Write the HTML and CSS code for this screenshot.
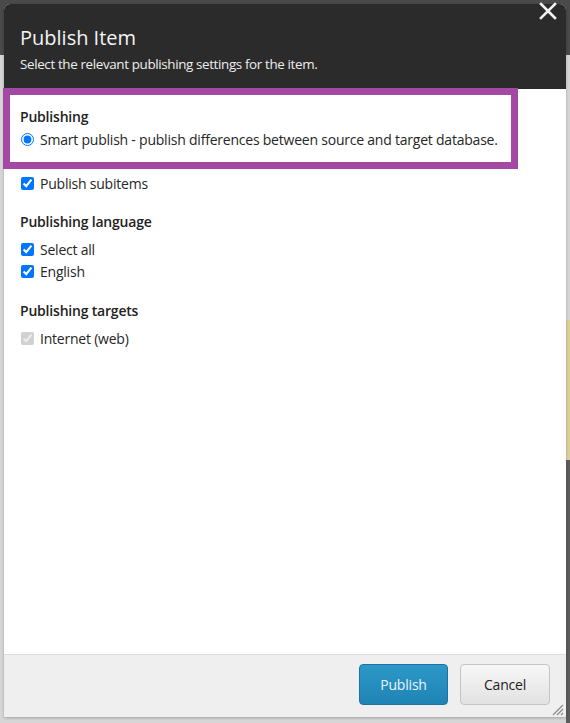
FILE: index.html
```html
<!DOCTYPE html>
<html lang="en">
<head>
<meta charset="utf-8">
<title>Publish Item</title>
<link rel="stylesheet" href="styles.css">
</head>
<body>
<div class="page">
  <div class="dialog">
    <header class="dialog-header">
      <h1 class="dialog-title">Publish Item</h1>
      <p class="dialog-subtitle">Select the relevant publishing settings for the item.</p>
      <svg class="close" width="20" height="20" viewBox="0 0 20 20" aria-label="Close">
        <path d="M3 3 L17 17 M17 3 L3 17" stroke="#f2f2f2" stroke-width="2.6" stroke-linecap="square"/>
      </svg>
    </header>
    <main class="dialog-body">
      <section class="group group-first">
        <h2 class="group-title">Publishing</h2>
        <label class="option option-tight"><input type="radio" name="mode" checked><span>Smart publish - publish differences between source and target database.</span></label>
        <label class="option option-sub"><input type="checkbox" checked><span>Publish subitems</span></label>
      </section>
      <section class="group">
        <h2 class="group-title">Publishing language</h2>
        <label class="option"><input type="checkbox" checked><span>Select all</span></label>
        <label class="option option-next"><input type="checkbox" checked><span>English</span></label>
      </section>
      <section class="group">
        <h2 class="group-title">Publishing targets</h2>
        <label class="option"><input type="checkbox" checked disabled><span>Internet (web)</span></label>
      </section>
    </main>
    <footer class="dialog-footer">
      <button class="btn btn-primary" type="button">Publish</button>
      <button class="btn btn-default" type="button">Cancel</button>
      <svg class="grip" width="14" height="14" viewBox="0 0 14 14">
        <path d="M13 3 L3 13 M13 7 L7 13 M13 11 L11 13" stroke="#8a8a8a" stroke-width="1.2"/>
      </svg>
    </footer>
  </div>
  <div class="highlight"></div>
</div>
</body>
</html>
```
FILE: styles.css
```css
* { box-sizing: border-box; }
html, body { margin: 0; padding: 0; }
body {
  width: 570px;
  height: 723px;
  overflow: hidden;
  font-family: "Open Sans", "Noto Sans", sans-serif;
  color: #262626;
  background:
    linear-gradient(to bottom, #4a4a4a 0, #4a4a4a 55px, transparent 55px),
    linear-gradient(to bottom, transparent 0, transparent 320px, #d9cf9f 320px, #d9cf9f 460px, #5c5c5c 460px) right top / 4px 100% no-repeat,
    #d6d6d6;
}
.page {
  position: relative;
  padding: 4px;
  height: 723px;
}
.dialog {
  width: 562px;
  height: 713px;
  display: flex;
  flex-direction: column;
  background: #fff;
  border-radius: 6px 6px 2px 2px;
  box-shadow: 0 1px 3px rgba(0,0,0,0.25);
}
.dialog-header {
  position: relative;
  height: 85px;
  background: #2b2b2b;
  color: #fff;
  padding: 21px 16px 0 16px;
  border-radius: 6px 6px 0 0;
}
.dialog-title {
  margin: 0;
  font-size: 20px;
  font-weight: 400;
  line-height: 26px;
  color: #f4f4f4;
}
.dialog-subtitle {
  margin: 3px 0 0 0;
  font-size: 13.4px;
  letter-spacing: -0.36px;
  line-height: 20px;
  color: #eeeeee;
}
.close {
  position: absolute;
  top: -3px;
  right: 8px;
}
.dialog-body {
  flex: 1;
  padding: 17px 16px 0 16px;
}
.group { margin-top: 17px; }
.group-first { margin-top: 0; }
.group + .group + .group { margin-top: 18px; }
.group-title {
  margin: 0;
  font-size: 14px;
  font-weight: 600;
  letter-spacing: -0.2px;
  line-height: 22px;
  color: #222;
}
.option {
  display: flex;
  align-items: center;
  height: 22px;
  margin-top: 5px;
  font-size: 14px;
  letter-spacing: -0.22px;
  color: #262626;
}
.option-tight { margin-top: 0; }
.option-sub { margin-top: 22px; }
.option-next { margin-top: 0; }
.option input {
  margin: 0 6px 0 1px;
  width: 13px;
  height: 13px;
  flex: none;
}
.dialog-footer {
  position: relative;
  height: 63px;
  background: #efefef;
  border-top: 1px solid #dedede;
  display: flex;
  justify-content: flex-end;
  align-items: flex-start;
  gap: 12px;
  padding: 9px 16px 0 0;
  border-radius: 0 0 2px 2px;
}
.btn {
  height: 41px;
  font-family: "Open Sans", "Noto Sans", sans-serif;
  font-size: 14px;
  letter-spacing: -0.2px;
  border-radius: 4px;
  padding: 0;
}
.btn-primary {
  width: 89px;
  color: #e9f5fb;
  background: linear-gradient(to bottom, #2c98c7, #1f84b5);
  border: 1px solid #1d74a0;
}
.btn-default {
  width: 90px;
  color: #222;
  background: linear-gradient(to bottom, #f7f7f7, #e2e2e2);
  border: 1px solid #c4c4c4;
}
.grip {
  position: absolute;
  right: 2px;
  bottom: 1px;
}
.highlight {
  position: absolute;
  left: 3px;
  top: 88px;
  width: 515px;
  height: 81px;
  border: 7px solid #a349a4;
  pointer-events: none;
}
```
